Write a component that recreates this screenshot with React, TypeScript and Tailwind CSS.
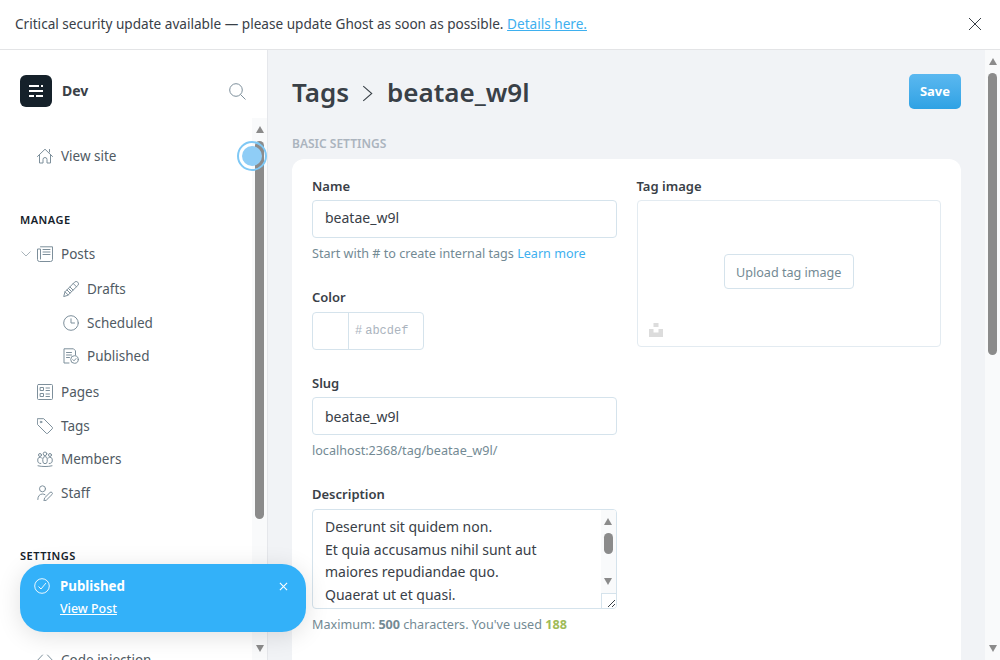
import type { ReactNode } from "react";

const strokeIcon = "fill-none stroke-[#7d8f9b] stroke-1";

function Icon({ children, size = 16 }: { children: ReactNode; size?: number }) {
  return (
    <svg viewBox="0 0 16 16" width={size} height={size} className={`${strokeIcon} shrink-0`} strokeLinecap="round" strokeLinejoin="round">
      {children}
    </svg>
  );
}

const HomeIcon = () => (
  <Icon>
    <path d="M0.500 8.500 8 1.200l7.500 7.300M2.500 7v8h3.500v-3.500a2 2 0 0 1 4 0V15h3.500V7M12.500 4V1.500" />
  </Icon>
);
const PostsIcon = () => (
  <Icon>
    <path d="M3.500.800h12v12.700a2 2 0 0 1-2 2H2.500a2 2 0 0 1-2-2V3h3v10M6 3.500h7M6 6h7M6 8.500h7" />
  </Icon>
);
const PencilIcon = () => (
  <Icon>
    <path d="M.8 15.200 2 10.800 11.500 1.200a1.800 1.800 0 0 1 3.300 3.300L5.200 14zM2 10.800 5.200 14M10.200 2.500l3.300 3.300M4 9l3 3M5.500 7.500l3 3M7 6l3 3" />
  </Icon>
);
const ClockIcon = () => (
  <Icon>
    <circle cx="8" cy="8" r="7.300" />
    <path d="M8 3.800V8h3.500" />
  </Icon>
);
const PublishedIcon = () => (
  <Icon>
    <path d="M6 15H1V.8h9.500l2 2V7M3.500 4.500h5M3.500 7h5M3.500 9.500h3" />
    <circle cx="11.500" cy="11.500" r="3.800" />
    <path d="m9.800 11.600 1.200 1.200 2-2.200" />
  </Icon>
);
const PagesIcon = () => (
  <Icon>
    <rect x=".5" y=".5" width="15" height="15" rx="1" />
    <path d="M3.500 3.500h3v3h-3zM3.500 9.500h3v3h-3zM9 4h3.500M9 6.500h3.500M9 10h3.500M9 12.500h3.500" />
  </Icon>
);
const TagIcon = () => (
  <Icon>
    <path d="M.7.700h6l8.600 8.600a1 1 0 0 1 0 1.400l-4.600 4.600a1 1 0 0 1-1.400 0L.7 6.700z" />
    <circle cx="4" cy="4" r=".8" />
  </Icon>
);
const MembersIcon = () => (
  <Icon>
    <circle cx="8" cy="2.800" r="1.800" />
    <circle cx="3" cy="4" r="1.500" />
    <circle cx="13" cy="4" r="1.500" />
    <path d="M5.800 7.800a2.200 2.200 0 0 1 4.400 0v2.700a2.200 2.200 0 0 1-4.400 0zM3.800 12.500C1.800 12.500.8 11.500.8 10V8A2.200 2.200 0 0 1 3 6.300c.8 0 1.500.3 2 .9M12.200 12.500c2 0 3-1 3-2.500V8A2.200 2.200 0 0 0 13 6.300c-.8 0-1.500.3-2 .9M1 14.800c4 1 10 1 14 0" />
  </Icon>
);
const StaffIcon = () => (
  <Icon>
    <circle cx="5.500" cy="3.800" r="3" />
    <path d="M.8 14.500c0-3.500 2-5.500 4.700-5.500 1 0 1.800.2 2.500.7M7 15.500l.6-2.600 5.400-5.400a1.300 1.300 0 0 1 2 2l-5.400 5.400z" />
  </Icon>
);
const CodeIcon = () => (
  <Icon>
    <path d="M5.500 3 .8 8l4.700 5M10.500 3l4.700 5-4.700 5" />
  </Icon>
);

function NavRow({ icon, label, className }: { icon: ReactNode; label: string; className: string }) {
  return (
    <div className={`flex items-center gap-[8px] h-5 pl-[37px] ${className}`}>
      {icon}
      <span>{label}</span>
    </div>
  );
}

function SubRow({ icon, label, className }: { icon: ReactNode; label: string; className: string }) {
  return (
    <div className={`flex items-center gap-[8px] h-5 pl-[63px] ${className}`}>
      {icon}
      <span>{label}</span>
    </div>
  );
}

function Scrollbar({ thumb, rest }: { thumb: string; rest: string }) {
  return (
    <div className={`w-[15px] shrink-0 flex flex-col items-center bg-[#f9fafb] ${rest}`}>
      <div className="h-[15px] shrink-0 pt-2">
        <div className="w-0 h-0 border-x-[4.500px] border-x-transparent border-b-[7px] border-b-[#8b8b8b]" />
      </div>
      <div className={`w-[9px] rounded-[5px] bg-[#8b8b8b] ${thumb}`} />
      <div className="mt-auto h-[15px] shrink-0">
        <div className="w-0 h-0 border-x-[4.500px] border-x-transparent border-t-[7px] border-t-[#8b8b8b]" />
      </div>
    </div>
  );
}

function Field({ label, className, children }: { label: string; className: string; children: ReactNode }) {
  return (
    <div className={className}>
      <div className="h-5 text-[13px] leading-5 font-semibold text-[#394047]">{label}</div>
      {children}
    </div>
  );
}

export default function App() {
  return (
    <div className="relative w-[1000px] h-[660px] overflow-hidden bg-white flex flex-col font-['Noto_Sans',sans-serif] text-[#394047]">
      {/* update banner */}
      <div className="h-[50px] shrink-0 flex items-center justify-between pl-[15px] pr-[18px] border-b border-[#e3e4e6] text-[13.600px]">
        <p>
          Critical security update available — please update Ghost as soon as possible.{" "}
          <span className="text-[#3eb0ef] underline">Details here.</span>
        </p>
        <svg viewBox="0 0 14 14" width="14" height="14" className="mb-[1px] fill-none stroke-[#394047] stroke-1">
          <path d="M1 1l12 12M13 1 1 13" />
        </svg>
      </div>

      <div className="flex-1 flex min-h-0">
        {/* sidebar */}
        <aside className="w-[268px] shrink-0 flex flex-col border-r border-[#e5e7eb]">
          <div className="h-[68px] shrink-0 flex items-start pt-[25px] pl-5 pr-[21px]">
            <div className="w-8 h-8 rounded-[6px] bg-[#15212a] flex items-center justify-center">
              <svg viewBox="0 0 14 12" width="14" height="12" className="fill-white">
                <rect x="0" y="0" width="10" height="2" />
                <rect x="12" y="0" width="2" height="2" />
                <rect x="0" y="5" width="14" height="2" />
                <rect x="0" y="10" width="5" height="2" />
                <rect x="7" y="10" width="7" height="2" />
              </svg>
            </div>
            <span className="ml-[10px] text-sm leading-8 font-bold">Dev</span>
            <svg viewBox="0 0 17 17" width="17" height="17" className="ml-auto mt-[8px] fill-none stroke-[#7d8f9b] stroke-1">
              <circle cx="7" cy="7" r="6.300" />
              <path d="m11.500 11.500 5 5" />
            </svg>
          </div>
          <div className="flex-1 flex min-h-0">
            <nav className="flex-1 min-w-0 overflow-hidden text-[13.500px] text-[#505a63]">
              <NavRow icon={<HomeIcon />} label="View site" className="mt-[28px]" />
              <div className="mt-[44px] h-5 pl-5 text-[11px] leading-5 font-semibold tracking-[0.5px] text-[#15212a]">MANAGE</div>
              <div className="relative mt-[14px]">
                <svg viewBox="0 0 10 6" width="10" height="6" className="absolute left-[21px] top-[7px] fill-none stroke-[#a9b4bb] stroke-1">
                  <path d="m.5.500 4.500 4.500 4.500-4.500" />
                </svg>
                <NavRow icon={<PostsIcon />} label="Posts" className="" />
              </div>
              <SubRow icon={<PencilIcon />} label="Drafts" className="mt-[15px]" />
              <SubRow icon={<ClockIcon />} label="Scheduled" className="mt-[14px]" />
              <SubRow icon={<PublishedIcon />} label="Published" className="mt-[13px]" />
              <NavRow icon={<PagesIcon />} label="Pages" className="mt-4" />
              <NavRow icon={<TagIcon />} label="Tags" className="mt-[14px]" />
              <NavRow icon={<MembersIcon />} label="Members" className="mt-[13px]" />
              <NavRow icon={<StaffIcon />} label="Staff" className="mt-[14px]" />
              <div className="mt-[43px] h-5 pl-5 text-[11px] leading-5 font-semibold tracking-[0.5px] text-[#15212a]">SETTINGS</div>
              <NavRow icon={<CodeIcon />} label="Code injection" className="mt-[84px]" />
            </nav>
            <Scrollbar rest="" thumb="h-[378px] mt-[8px]" />
          </div>
        </aside>

        {/* main */}
        <main className="flex-1 min-w-0 flex bg-[#f1f3f6]">
          <div className="flex-1 min-w-0 overflow-hidden pl-[24px] pr-[24px]">
            <div className="flex items-start justify-between pt-6 h-[84px]">
              <h1 className="flex items-center text-[26px] leading-[36px] font-semibold text-[#394047]">
                Tags
                <svg viewBox="0 0 10 16" width="11" height="17" className="ml-[13px] mr-[14px] mt-[2px] fill-none stroke-[#394047] stroke-1">
                  <path d="m1 1 8 7-8 7" />
                </svg>
                beatae_w9l
              </h1>
              <button className="w-[52px] h-[35px] rounded-[5px] bg-gradient-to-b from-[#5ab8f0] to-[#2ea2e4] text-[13px] font-bold text-white">Save</button>
            </div>
            <div className="h-5 text-xs leading-5 font-semibold text-[#abb4be]">BASIC SETTINGS</div>
            <section className="mt-[5px] bg-white rounded-t-[12px] h-[520px] px-5 pt-[17px] grid grid-cols-2 gap-x-5 text-[13.500px]">
              <div>
                <Field label="Name" className="">
                  <div className="mt-1 h-[38px] px-3 pb-[2px] flex items-center border border-[#d5e3ec] rounded-[4px] text-sm">beatae_w9l</div>
                </Field>
                <p className="mt-[6px] h-5 text-[12.600px] leading-5 text-[#738a94]">
                  Start with # to create internal tags <span className="text-[#3eb0ef]">Learn more</span>
                </p>
                <Field label="Color" className="mt-[23px]">
                  <div className="mt-[5px] w-[112px] h-[38px] flex border border-[#d5e3ec] rounded-[4px]">
                    <div className="w-9 border-r border-[#d5e3ec]" />
                    <div className="flex items-center pl-[6px] font-['Liberation_Mono',monospace] text-xs text-[#abb4be]">
                      <span className="mr-[3px]">#</span>
                      <span>abcdef</span>
                    </div>
                  </div>
                </Field>
                <Field label="Slug" className="mt-[23px]">
                  <div className="mt-1 h-[38px] px-3 pt-[2px] flex items-center border border-[#d5e3ec] rounded-[4px] text-sm">beatae_w9l</div>
                </Field>
                <p className="mt-[6px] h-5 text-[12.600px] leading-5 text-[#738a94]">localhost:2368/tag/beatae_w9l/</p>
                <Field label="Description" className="mt-[23px]">
                  <div className="mt-[5px] h-[100px] flex border border-[#d5e3ec] rounded-[4px] overflow-hidden">
                    <div className="flex-1 pl-3 pt-[6px] text-sm leading-[22.500px] overflow-hidden">
                      Deserunt sit quidem non.
                      <br />
                      Et quia accusamus nihil sunt aut
                      <br />
                      maiores repudiandae quo.
                      <br />
                      Quaerat ut et quasi.
                    </div>
                    <div className="w-[15px] flex flex-col bg-[#f9fafb]">
                      <Scrollbar rest="h-[83px]" thumb="h-[21px] mt-[8px]" />
                      <div className="h-[15px] bg-white border-l border-t border-[#d5e3ec] flex items-end justify-end">
                        <svg viewBox="0 0 9 9" width="9" height="9" className="fill-none stroke-[#394047] stroke-1">
                          <path d="M1 8 8 1M5 8l3-3" />
                        </svg>
                      </div>
                    </div>
                  </div>
                </Field>
                <p className="mt-[6px] h-5 text-[12.600px] leading-5 text-[#738a94]">
                  Maximum: <b className="font-bold">500</b> characters. You've used <b className="font-bold text-[#9fbb58]">188</b>
                </p>
              </div>
              <div>
                <Field label="Tag image" className="">
                  <div className="relative mt-1 h-[147px] pb-1 flex items-center justify-center border border-[#e3ebf1] rounded-[4px]">
                    <div className="w-[130px] h-[35px] pt-[3px] flex items-center justify-center border border-[#d5e3ec] rounded-[4px] text-[12.600px] text-[#738a94]">Upload tag image</div>
                    <svg viewBox="0 0 14 14" width="14" height="14" className="absolute left-[11px] bottom-[9px] fill-[#dcdcdc]">
                      <path d="M4.500 0h5v4h-5zM0 6h4.500v3.500h5V6H14v8H0z" />
                    </svg>
                  </div>
                </Field>
              </div>
            </section>
          </div>
          <Scrollbar rest="" thumb="h-[282px] mt-[8px]" />
        </main>
      </div>

      {/* focus pulse on the nav scrollbar */}
      <div className="absolute left-[237px] top-[141px] w-[30px] h-[30px] rounded-full border-2 border-[#7fc8f5] flex items-center justify-center">
        <div className="w-5 h-5 rounded-full bg-[#8fcdf6]" />
      </div>

      {/* toast */}
      <div className="absolute left-5 top-[564px] w-[286px] h-[68px] rounded-[24px] bg-[#33b1f9] text-white shadow-[0_4px_24px_rgba(0,0,0,0.12)]">
        <svg viewBox="0 0 16 16" width="16" height="16" className="absolute left-[14px] top-[14px] fill-none stroke-white stroke-[0.9]">
          <circle cx="8" cy="8" r="7.300" />
          <path d="m4.500 8.500 2.500 2.500 5-6" />
        </svg>
        <div className="absolute left-10 top-[12px] text-[13.300px] leading-5 font-bold">Published</div>
        <div className="absolute left-10 top-[35px] text-[12.400px] leading-5 font-medium underline">View Post</div>
        <svg viewBox="0 0 10 10" width="9" height="9" className="absolute right-[18px] top-[18px] fill-none stroke-white stroke-[1.200]">
          <path d="m1 1 8 8M9 1 1 9" />
        </svg>
      </div>
    </div>
  );
}
